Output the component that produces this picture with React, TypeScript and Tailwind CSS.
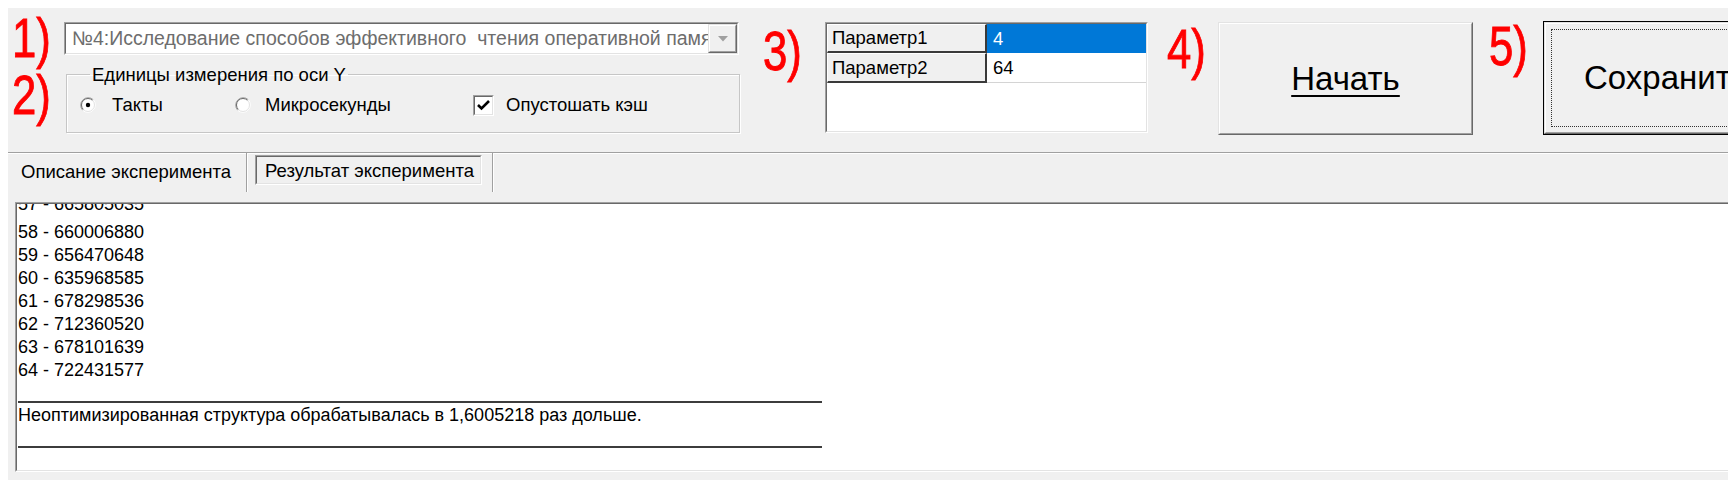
import React from "react";

type BoxProps = {
  className?: string;
  inner?: string;
  children?: React.ReactNode;
};

// classic win32 3D frames
const Sunken = ({ className = "", inner = "", children }: BoxProps) => (
  <div className={"shrink-0 border border-t-[#a0a0a0] border-l-[#a0a0a0] border-r-white border-b-white " + className}>
    <div className={"h-full border border-t-[#696969] border-l-[#696969] border-r-[#e3e3e3] border-b-[#e3e3e3] " + inner}>
      {children}
    </div>
  </div>
);

const Raised = ({ className = "", inner = "", children }: BoxProps) => (
  <div className={"shrink-0 border border-t-[#e3e3e3] border-l-[#e3e3e3] border-r-[#696969] border-b-[#696969] " + className}>
    <div className={"h-full border border-t-white border-l-white border-r-[#a0a0a0] border-b-[#a0a0a0] " + inner}>
      {children}
    </div>
  </div>
);

const Mark = ({ text, className = "" }: { text: string; className?: string }) => (
  <div className={"shrink-0 " + className}>
    <span className="inline-block origin-left scale-x-[0.78] text-[56px] leading-none text-[#ff0000] [-webkit-text-stroke:0.9px_#ff0000]">
      {text}
    </span>
  </div>
);

const Radio = ({ checked }: { checked?: boolean }) => (
  <svg width="16" height="16" viewBox="0 0 16 16" className="shrink-0">
    <circle cx="8" cy="8" r="7" fill="white" />
    <path d="M2.7 13.3 A7.5 7.5 0 0 1 13.3 2.7" stroke="#a0a0a0" fill="none" />
    <path d="M3.4 12.6 A6.5 6.5 0 0 1 12.6 3.4" stroke="#696969" fill="none" />
    <path d="M13.3 2.7 A7.5 7.5 0 0 1 2.7 13.3" stroke="#ffffff" fill="none" />
    <path d="M12.6 3.4 A6.5 6.5 0 0 1 3.4 12.6" stroke="#e3e3e3" fill="none" />
    {checked && <circle cx="8" cy="8" r="2.2" fill="black" />}
  </svg>
);

const numbers = [
  "58 - 660006880",
  "59 - 656470648",
  "60 - 635968585",
  "61 - 678298536",
  "62 - 712360520",
  "63 - 678101639",
  "64 - 722431577",
];

export default function App() {
  return (
    <div className="w-[1728px] h-[480px] bg-white pt-2 pl-2 overflow-hidden font-[family-name:Liberation_Sans,Arial,sans-serif] text-black">
      <div className="w-[1720px] h-[472px] bg-[#f0f0f0] overflow-hidden flex flex-col">
        {/* top controls */}
        <div className="h-[144px] shrink-0 flex items-start">
          <div className="w-[56px] shrink-0 pl-[4px] pt-[2px] flex flex-col">
            <Mark text="1)" />
            <Mark text="2)" className="mt-[1px]" />
          </div>

          <div className="w-[676px] shrink-0 flex flex-col">
            <Sunken className="mt-[14px] w-[675px] h-[33px]" inner="bg-white flex">
              <div className="flex-1 overflow-hidden whitespace-pre pl-[6px] text-[19.5px] leading-[29px] text-[#6d6d6d]">
                №4:Исследование способов эффективного  чтения оперативной памяти
              </div>
              <Raised className="w-[29px] h-full" inner="bg-[#f0f0f0] flex items-center justify-center">
                <svg width="10" height="6" viewBox="0 0 10 6">
                  <path d="M0 0 H10 L5 5.5 Z" fill="#a0a0a0" />
                </svg>
              </Raised>
            </Sunken>

            <fieldset className="mt-[9px] ml-[2px] w-[674px] border border-[#c6c6c6] shadow-[inset_1px_1px_0_#fff,1px_1px_0_#fff] pt-[9px] pb-[16px] pl-[13px]">
              <legend className="ml-[10px] px-[2px] text-[18.5px] leading-[21px]">Единицы измерения по оси Y</legend>
              <div className="h-[22px] flex items-center text-[18.5px]">
                <div className="w-[155px] flex items-center">
                  <Radio checked />
                  <span className="ml-[16px]">Такты</span>
                </div>
                <div className="w-[238px] flex items-center">
                  <Radio />
                  <span className="ml-[14px]">Микросекунды</span>
                </div>
                <div className="flex items-center">
                  <Sunken className="w-[21px] h-[21px]" inner="bg-white flex items-center justify-center">
                    <svg width="13" height="11" viewBox="0 0 13 11">
                      <path d="M1 5 L4.5 8.5 L12 1" stroke="black" strokeWidth="2.6" fill="none" />
                    </svg>
                  </Sunken>
                  <span className="ml-[12px]">Опустошать кэш</span>
                </div>
              </div>
            </fieldset>
          </div>

          <Mark text="3)" className="ml-[23px] w-[62px] pt-[15px]" />

          <Sunken className="mt-[14px] w-[323px] h-[111px]" inner="bg-white text-[18.5px]">
            <div className="flex h-[29px]">
              <div className="w-[160px] pl-[4px] flex items-center bg-[#f0f0f0] border-t border-l border-r-2 border-b-2 border-t-white border-l-white border-r-[#3a3a3a] border-b-[#3a3a3a]">
                Параметр1
              </div>
              <div className="flex-1 pl-[6px] flex items-center bg-[#0078d7] text-white">4</div>
            </div>
            <div className="flex h-[30px]">
              <div className="w-[160px] pl-[4px] flex items-center bg-[#f0f0f0] border-t border-l border-r-2 border-b-2 border-t-white border-l-white border-r-[#3a3a3a] border-b-[#3a3a3a]">
                Параметр2
              </div>
              <div className="flex-1 pl-[6px] flex items-center border-b border-[#d4d4d4]">64</div>
            </div>
          </Sunken>

          <Mark text="4)" className="ml-[19px] w-[51px] pt-[13px]" />

          <Raised className="mt-[14px] w-[255px] h-[113px]" inner="bg-[#f0f0f0] flex items-center justify-center">
            <span className="text-[33px] underline underline-offset-[5px] decoration-[2px]">Начать</span>
          </Raised>

          <Mark text="5)" className="ml-[16px] w-[54px] pt-[10px]" />

          <div className="mt-[13px] w-[262px] h-[114px] shrink-0 border border-black">
            <Raised className="w-full h-full" inner="bg-[#f0f0f0] p-[5px]">
              <div className="h-full border border-dotted border-[#333] flex items-center pl-[32px] whitespace-nowrap">
                <span className="text-[33px]">Сохранить</span>
              </div>
            </Raised>
          </div>
        </div>

        {/* tool strip */}
        <div className="h-[50px] shrink-0 border-t border-t-[#a0a0a0] shadow-[inset_0_1px_0_#fff] flex items-start text-[18.5px] leading-[21px]">
          <div className="w-[238px] shrink-0 pl-[13px] pt-[8px]">Описание эксперимента</div>
          <div className="w-[2px] h-[39px] shrink-0 border-l border-l-[#a0a0a0] border-r border-r-white" />
          <Sunken className="ml-[7px] mt-[2px] w-[227px] h-[30px]" inner="bg-[#f0f0f0] pl-[8px] flex items-center">
            Результат эксперимента
          </Sunken>
          <div className="ml-[10px] w-[2px] h-[39px] shrink-0 border-l border-l-[#a0a0a0] border-r border-r-white" />
        </div>

        {/* output memo */}
        <Sunken className="ml-[7px] w-[1740px] h-[270px]" inner="bg-white overflow-hidden">
          <div className="-mt-[11px] pl-[1px] text-[18px]">
            <div className="h-[27.5px] leading-[23px]">57 - 665805035</div>
            {numbers.map((line) => (
              <div key={line} className="h-[23px] leading-[23px]">
                {line}
              </div>
            ))}
            <div className="mt-[19px] w-[804px] h-[2px] bg-[#3c3c3c]" />
            <div className="mt-[1px] h-[23px] leading-[23px]">
              Неоптимизированная структура обрабатывалась в 1,6005218 раз дольше.
            </div>
            <div className="mt-[19px] w-[804px] h-[2px] bg-[#3c3c3c]" />
          </div>
        </Sunken>
      </div>
    </div>
  );
}
